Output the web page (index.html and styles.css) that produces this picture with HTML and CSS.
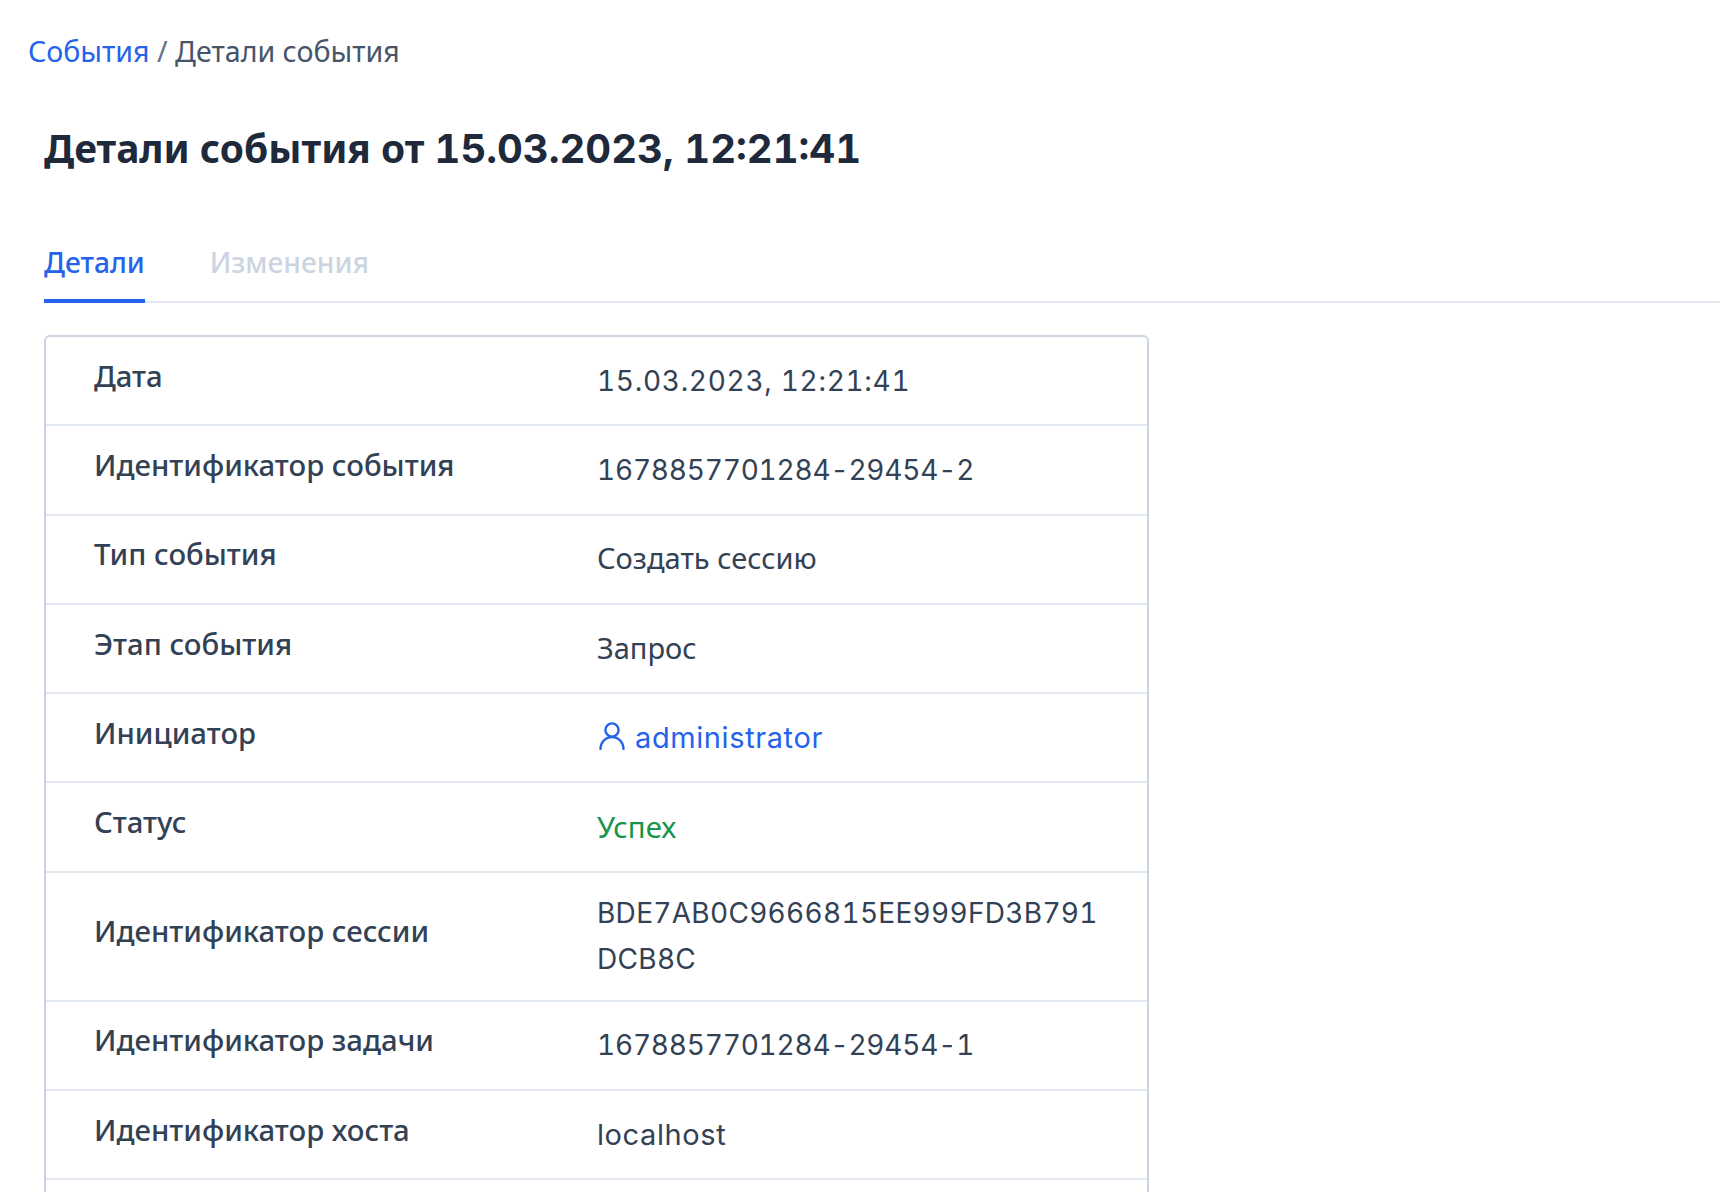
FILE: index.html
```html
<!DOCTYPE html>
<html lang="ru">
<head>
<meta charset="utf-8">
<title>Детали события</title>
<link rel="stylesheet" href="styles.css">
</head>
<body>
<nav class="crumbs"><a class="link" href="#">События</a> <span class="sep">/</span> Детали события</nav>
<main class="content">
  <h1 class="title">Детали события от <span class="num-bold">15.03.2023, 12:21:41</span></h1>
  <div class="tabs">
    <span class="tab tab-active">Детали</span>
    <span class="tab">Изменения</span>
  </div>
  <div class="card">
    <div class="row"><div class="label">Дата</div><div class="value num date">15.03.2023, 12:21:41</div></div>
    <div class="row"><div class="label">Идентификатор события</div><div class="value num">1678857701284-29454-2</div></div>
    <div class="row"><div class="label">Тип события</div><div class="value text">Создать сессию</div></div>
    <div class="row"><div class="label">Этап события</div><div class="value text">Запрос</div></div>
    <div class="row"><div class="label">Инициатор</div><div class="value latin"><a class="link user" href="#"><svg class="user-icon" viewBox="0 0 26 28" fill="none" stroke="currentColor" stroke-width="2.4" stroke-linecap="round" stroke-linejoin="round"><circle cx="13" cy="8" r="6.6"/><path d="M1.5 27c0-6.6 5-12 11.5-12s11.5 5.4 11.5 12"/></svg>administrator</a></div></div>
    <div class="row"><div class="label">Статус</div><div class="value success">Успех</div></div>
    <div class="row"><div class="label">Идентификатор сессии</div><div class="value num hash">BDE7AB0C9666815EE999FD3B791DCB8C</div></div>
    <div class="row"><div class="label">Идентификатор задачи</div><div class="value num">1678857701284-29454-1</div></div>
    <div class="row"><div class="label">Идентификатор хоста</div><div class="value latin">localhost</div></div>
    <div class="row"></div>
  </div>
</main>
</body>
</html>
```
FILE: styles.css
```css
html, body { margin: 0; padding: 0; height: 1192px; overflow: hidden; background: #fff; }
body { font-family: "Noto Sans", Inter, sans-serif; color: #334155; font-size: 29px; }
.link { color: #2563eb; text-decoration: none; }
.crumbs { padding: 29px 0 0 28px; line-height: 44px; font-size: 28.6px; color: #475569; }
.sep { color: #64748b; }
.content { padding-left: 44px; height: 1119px; overflow: hidden; }
.title { margin: 49px 0 0; font-size: 38.9px; line-height: 52px; font-weight: 700; color: #1e293b; }
.num-bold { font-family: Inter, sans-serif; font-variant-numeric: tabular-nums; font-size: 40px; }
.tabs { display: flex; gap: 65px; margin-top: 58px; border-bottom: 2px solid #e2e8f0; height: 68px; }
.tab { color: #cbd5e1; font-weight: 500; font-size: 28.2px; line-height: 44px; padding-top: 7px; margin-bottom: -2px; }
.tab-active { color: #2563eb; border-bottom: 4px solid #2563eb; }
.card { margin-top: 32px; width: 1105px; box-sizing: border-box; border: 2px solid #cbd5e1; border-radius: 6px; }
.row { display: flex; align-items: center; min-height: 89.3px; padding: 17.5px 0; box-sizing: border-box; border-bottom: 2px solid #e2e8f0; }
.label { width: 551px; padding-left: 48px; box-sizing: border-box; margin-bottom: 10px; font-weight: 500; font-size: 29.3px; flex: none; }
.value { width: 510px; line-height: 46px; word-break: break-all; }
.text { margin-bottom: 2px; }
.num { font-family: Inter, sans-serif; font-size: 28px; font-variant-numeric: tabular-nums; letter-spacing: -0.2px; }
.date { letter-spacing: 0.7px; }
.hash { letter-spacing: 0.3px; }
.latin { font-family: Inter, sans-serif; letter-spacing: 0.6px; }
.user-icon { width: 26px; height: 28px; margin: 0 10px 0 2px; vertical-align: -2px; }
.success { color: #18944a; font-size: 29.4px; }
```
